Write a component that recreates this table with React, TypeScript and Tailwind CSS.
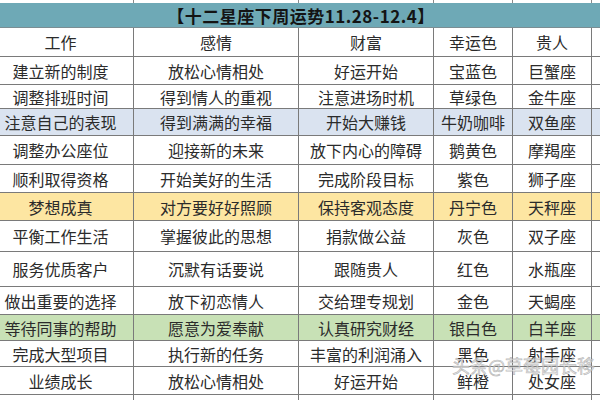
import React from "react";

type Row = { cells: string[]; h: string; bg?: string };

const rows: Row[] = [
  { cells: ["工作", "感情", "财富", "幸运色", "贵人"], h: "h-[29px]" },
  { cells: ["建立新的制度", "放松心情相处", "好运开始", "宝蓝色", "巨蟹座"], h: "h-[28px]" },
  { cells: ["调整排班时间", "得到情人的重视", "注意进场时机", "草绿色", "金牛座"], h: "h-[24px]" },
  { cells: ["注意自己的表现", "得到满满的幸福", "开始大赚钱", "牛奶咖啡", "双鱼座"], h: "h-[27px]", bg: "bg-[#dae3f0]" },
  { cells: ["调整办公座位", "迎接新的未来", "放下内心的障碍", "鹅黄色", "摩羯座"], h: "h-[29px]" },
  { cells: ["顺利取得资格", "开始美好的生活", "完成阶段目标", "紫色", "狮子座"], h: "h-[28px]" },
  { cells: ["梦想成真", "对方要好好照顾", "保持客观态度", "丹宁色", "天秤座"], h: "h-[28px]", bg: "bg-[#fde6a2]" },
  { cells: ["平衡工作生活", "掌握彼此的思想", "捐款做公益", "灰色", "双子座"], h: "h-[31px]" },
  { cells: ["服务优质客户", "沉默有话要说", "跟随贵人", "红色", "水瓶座"], h: "h-[35px]" },
  { cells: ["做出重要的选择", "放下初恋情人", "交给理专规划", "金色", "天蝎座"], h: "h-[28px]" },
  { cells: ["等待同事的帮助", "愿意为爱奉献", "认真研究财经", "银白色", "白羊座"], h: "h-[26px]", bg: "bg-[#c8e1b6]" },
  { cells: ["完成大型项目", "执行新的任务", "丰富的利润涌入", "黑色", "射手座"], h: "h-[26px]" },
  { cells: ["业绩成长", "放松心情相处", "好运开始", "鲜橙", "处女座"], h: "h-[28px]" },
  { cells: ["", "", "", "", ""], h: "h-[20px]" },
];

const cols = "grid grid-cols-[146px_165px_135px_79px_79px_1fr]";

export default function App() {
  return (
    <div
      className="relative w-[600px] h-[400px] overflow-hidden bg-white text-[#2b2b2b]"
      style={{ fontFamily: '"Noto Sans CJK SC", "Noto Sans", sans-serif' }}
    >
      <div className="-ml-[12px] w-[612px]">
        {/* top strip from the row above */}
        <div className={`${cols} h-[3px]`}>
          <div className="border-r border-[#8a8a8a]" />
          <div className="border-r border-[#8a8a8a]" />
          <div className="border-r border-[#8a8a8a]" />
          <div className="border-r border-[#8a8a8a]" />
          <div className="border-r border-[#8a8a8a]" />
          <div />
        </div>

        {/* title */}
        <div className="h-[25px] bg-[#6ea9b6] border-b border-[#7b8e93] flex items-center">
          <div className="w-[612px] text-center pl-[14px] text-[17px] font-bold leading-none text-[#141414] tracking-[0.5px]">
            【十二星座下周运势11.28-12.4】
          </div>
        </div>

        {rows.map((row, i) => (
          <div key={i} className={`${cols} ${row.h} ${row.bg ?? ""} border-b border-[#7a7a7a]`}>
            {row.cells.map((c, j) => (
              <div
                key={j}
                className="border-r border-[#7a7a7a] flex items-center justify-center text-[16px] leading-none whitespace-nowrap"
              >
                {c}
              </div>
            ))}
            <div />
          </div>
        ))}
      </div>

      {/* watermark */}
      <div
        className="absolute left-[452px] top-[356px] text-[18px] leading-none text-[#e6e6e6]/70 whitespace-nowrap"
        style={{ WebkitTextStroke: "0.7px rgba(140,140,140,0.55)" }}
      >
        头条@草莓园长移
      </div>
    </div>
  );
}
